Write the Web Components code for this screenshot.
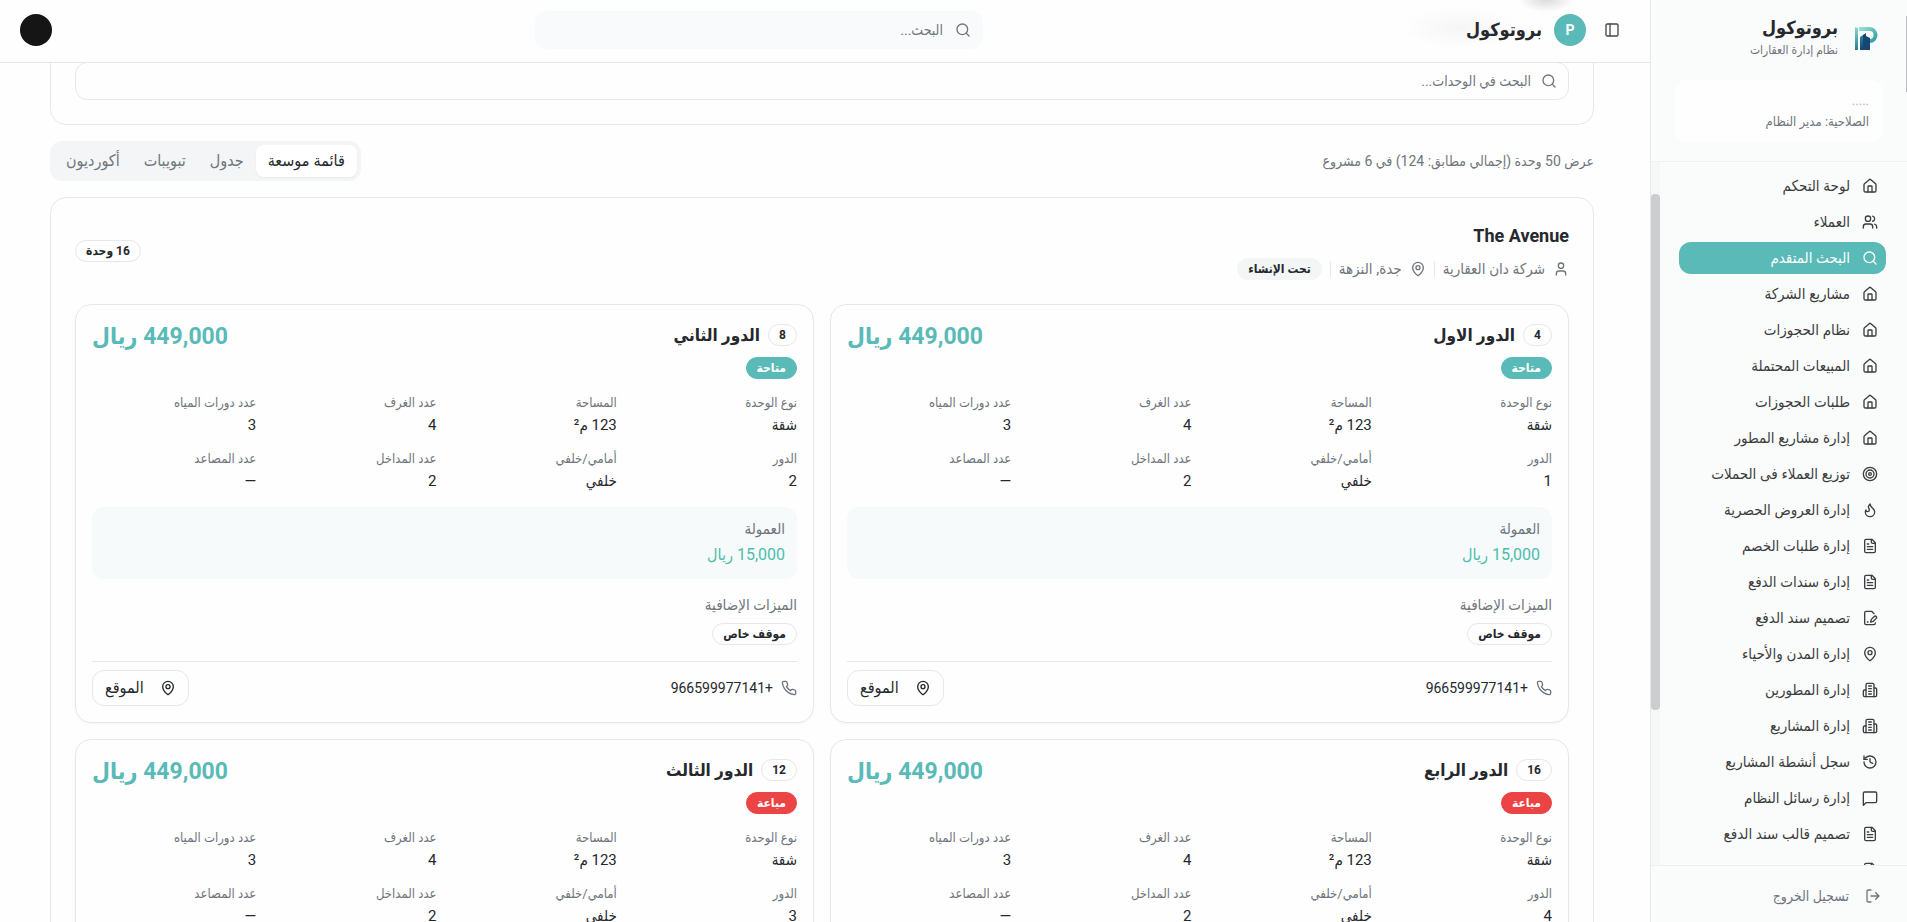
<!DOCTYPE html>
<html lang="ar" dir="rtl">
<head>
<meta charset="UTF-8">
<meta name="viewport" content="width=device-width, initial-scale=1.0">
<title>بروتوكول</title>
<style>
  :root {
    --teal: #59bab7;
    --red: #ec4345;
    --text: #25282d;
    --muted: #6f757d;
    --line: #e6e7e9;
    --soft: #f3f5f6;
  }
  html, body { height: 100%; }
  body {
    margin: 0;
    overflow: hidden;
    background: #fefefe;
    color: var(--text);
    font: 14px/20px Roboto, "DejaVu Sans Condensed", "DejaVu Sans", sans-serif;
  }
</style>
</head>
<body>

<app-shell>
  <side-bar slot="side">
    <nav-item icon="house"></nav-item>
    <nav-item icon="house">لوحة التحكم</nav-item>
    <nav-item icon="users">العملاء</nav-item>
    <nav-item icon="search" active>البحث المتقدم</nav-item>
    <nav-item icon="house">مشاريع الشركة</nav-item>
    <nav-item icon="house">نظام الحجوزات</nav-item>
    <nav-item icon="house">المبيعات المحتملة</nav-item>
    <nav-item icon="house">طلبات الحجوزات</nav-item>
    <nav-item icon="house">إدارة مشاريع المطور</nav-item>
    <nav-item icon="target">توزيع العملاء فى الحملات</nav-item>
    <nav-item icon="flame">إدارة العروض الحصرية</nav-item>
    <nav-item icon="file">إدارة طلبات الخصم</nav-item>
    <nav-item icon="file">إدارة سندات الدفع</nav-item>
    <nav-item icon="sign">تصميم سند الدفع</nav-item>
    <nav-item icon="pin">إدارة المدن والأحياء</nav-item>
    <nav-item icon="building">إدارة المطورين</nav-item>
    <nav-item icon="building">إدارة المشاريع</nav-item>
    <nav-item icon="history">سجل أنشطة المشاريع</nav-item>
    <nav-item icon="message">إدارة رسائل النظام</nav-item>
    <nav-item icon="file">تصميم قالب سند الدفع</nav-item>
    <nav-item icon="file"></nav-item>
  </side-bar>

  <top-bar slot="top">بروتوكول</top-bar>

  <unit-search></unit-search>
  <view-bar>
    <span slot="count">عرض 50 وحدة (إجمالي مطابق: 124) في 6 مشروع</span>
  </view-bar>
  <project-card>
    <span slot="name">The Avenue</span>
    <span slot="company">شركة دان العقارية</span>
    <span slot="place">جدة, النزهة</span>
    <span slot="state">تحت الإنشاء</span>
    <span slot="total">16 وحدة</span>
    <unit-card number="4" name="الدور الاول" floor="1" status="متاحة"></unit-card>
    <unit-card number="8" name="الدور الثاني" floor="2" status="متاحة"></unit-card>
    <unit-card number="16" name="الدور الرابع" floor="4" status="مباعة" sold></unit-card>
    <unit-card number="12" name="الدور الثالث" floor="3" status="مباعة" sold></unit-card>
  </project-card>
</app-shell>

<script>
// 24x24 line icons
const icons = {
  house: '<path d="M15 21v-8a1 1 0 0 0-1-1h-4a1 1 0 0 0-1 1v8"/><path d="M3 10a2 2 0 0 1 .709-1.528l7-5.999a2 2 0 0 1 2.582 0l7 5.999A2 2 0 0 1 21 10v9a2 2 0 0 1-2 2H5a2 2 0 0 1-2-2z"/>',
  users: '<path d="M16 21v-2a4 4 0 0 0-4-4H6a4 4 0 0 0-4 4v2"/><circle cx="9" cy="7" r="4"/><path d="M22 21v-2a4 4 0 0 0-3-3.87M16 3.13a4 4 0 0 1 0 7.75"/>',
  user: '<path d="M19 21v-2a4 4 0 0 0-4-4H9a4 4 0 0 0-4 4v2"/><circle cx="12" cy="7" r="4"/>',
  search: '<circle cx="11" cy="11" r="8"/><path d="m21 21-4.3-4.3"/>',
  target: '<circle cx="12" cy="12" r="10"/><circle cx="12" cy="12" r="6"/><circle cx="12" cy="12" r="2"/>',
  flame: '<path d="M8.5 14.5A2.5 2.5 0 0 0 11 12c0-1.38-.5-2-1-3-1.072-2.143-.224-4.054 2-6 .5 2.5 2 4.9 4 6.5 2 1.6 3 3.5 3 5.5a7 7 0 1 1-14 0c0-1.153.433-2.294 1-3a2.5 2.5 0 0 0 2.5 2.5z"/>',
  file: '<path d="M15 2H6a2 2 0 0 0-2 2v16a2 2 0 0 0 2 2h12a2 2 0 0 0 2-2V7Z"/><path d="M14 2v4a2 2 0 0 0 2 2h4M10 9H8M16 13H8M16 17H8"/>',
  sign: '<path d="M20 19.5v.5a2 2 0 0 1-2 2H6a2 2 0 0 1-2-2V4a2 2 0 0 1 2-2h8.5L18 5.5"/><path d="M8 18h1"/><path d="M18.42 9.61a2.1 2.1 0 1 1 2.97 2.97L16.95 17 13 18l.99-3.95 4.43-4.44Z"/>',
  pin: '<path d="M20 10c0 4.993-5.539 10.193-7.399 11.799a1 1 0 0 1-1.202 0C9.539 20.193 4 14.993 4 10a8 8 0 0 1 16 0"/><circle cx="12" cy="10" r="3"/>',
  building: '<path d="M6 22V4a2 2 0 0 1 2-2h8a2 2 0 0 1 2 2v18Z"/><path d="M6 12H4a2 2 0 0 0-2 2v6a2 2 0 0 0 2 2h2M18 9h2a2 2 0 0 1 2 2v9a2 2 0 0 1-2 2h-2M10 6h4M10 10h4M10 14h4M10 18h4"/>',
  history: '<path d="M3 12a9 9 0 1 0 9-9 9.75 9.75 0 0 0-6.74 2.74L3 8"/><path d="M3 3v5h5M12 7v5l4 2"/>',
  message: '<path d="M22 17a2 2 0 0 1-2 2H6l-4 4V5a2 2 0 0 1 2-2h16a2 2 0 0 1 2 2z"/>',
  logout: '<path d="M9 21H5a2 2 0 0 1-2-2V5a2 2 0 0 1 2-2h4M16 17l5-5-5-5M21 12H9"/>',
  phone: '<path d="M22 16.92v3a2 2 0 0 1-2.18 2 19.79 19.79 0 0 1-8.63-3.07 19.5 19.5 0 0 1-6-6 19.79 19.79 0 0 1-3.07-8.67A2 2 0 0 1 4.11 2h3a2 2 0 0 1 2 1.72 12.84 12.84 0 0 0 .7 2.81 2 2 0 0 1-.45 2.11L8.09 9.91a16 16 0 0 0 6 6l1.27-1.27a2 2 0 0 1 2.11-.45 12.84 12.84 0 0 0 2.81.7A2 2 0 0 1 22 16.92z"/>',
  panel: '<rect x="3" y="3" width="18" height="18" rx="2"/><path d="M9 3v18"/>'
};

// shared base: every element gives its markup and its styles
class BaseElement extends HTMLElement {
  constructor () {
    super();
    this.attachShadow({ mode: "open" });
  }
  connectedCallback () {
    const template = document.createElement('template');
    template.innerHTML = `
      <style>
        :host, * { box-sizing: border-box; }
        h1, h2, h3, p, dl, dt, dd { margin: 0; }
        button, input { font: inherit; color: inherit; }
        ${this.getStyles()}
      </style>
      ${this.getTemplate()}
    `;
    this.shadowRoot.replaceChildren(template.content.cloneNode(true));
  }
}

class LineIcon extends BaseElement {
  getTemplate () {
    return `
      <svg viewBox="0 0 24 24" fill="none" stroke="currentColor" stroke-width="2"
        stroke-linecap="round" stroke-linejoin="round" aria-hidden="true">${icons[this.getAttribute('name')]}</svg>
    `;
  }
  getStyles () {
    return `
      :host { display: block; flex: none; width: 16px; height: 16px; }
      svg { display: block; width: 100%; height: 100%; }
    `;
  }
}

class AppShell extends BaseElement {
  getTemplate () {
    return `
      <slot name="side"></slot>
      <div class="page">
        <slot name="top"></slot>
        <main><slot></slot></main>
      </div>
      <i class="thumb"></i>
    `;
  }
  getStyles () {
    return `
      :host { display: flex; height: 100vh; overflow: hidden; }
      .page { flex: 1; min-width: 0; display: flex; flex-direction: column; }
      main {
        flex: 1;
        min-height: 0;
        overflow: hidden;
        display: flex;
        flex-direction: column;
        gap: 16px;
        padding: 0 56px 0 50px;
      }
      .thumb {
        position: absolute;
        top: 16px;
        right: 0;
        width: 1px;
        height: 76px;
        background: #b9bbbd;
      }
    `;
  }
}

class SideBar extends BaseElement {
  getTemplate () {
    return `
      <header>
        <div class="brand">
          <svg class="logo" viewBox="0 0 24 24" aria-hidden="true">
            <defs>
              <linearGradient id="bar" x1="0" y1="0" x2="0" y2="1">
                <stop offset="0" stop-color="#8edbd0"/><stop offset="1" stop-color="#1f7f8b"/>
              </linearGradient>
              <linearGradient id="bow" x1="0" y1="0" x2="1" y2="1">
                <stop offset="0" stop-color="#9adfd3"/><stop offset="1" stop-color="#2f9d9f"/>
              </linearGradient>
              <linearGradient id="tower" x1="0" y1="0" x2="0" y2="1">
                <stop offset="0" stop-color="#2b8c97"/><stop offset="1" stop-color="#15406e"/>
              </linearGradient>
            </defs>
            <path fill="url(#bar)" d="M1 1l3 1v22H1z"/>
            <path fill="none" stroke="url(#bow)" stroke-width="4" d="M5 3h10a6 6 0 0 1 1 12"/>
            <path fill="url(#tower)" d="M6 11l3-2v15H6z"/>
            <path fill="#164674" d="M9 9l3-2v3l4 2v12H9z"/>
          </svg>
          <div>
            <h1>بروتوكول</h1>
            <p>نظام إدارة العقارات</p>
          </div>
        </div>
        <div class="account">
          <span class="dots">.....</span>
          <span>الصلاحية: مدير النظام</span>
        </div>
      </header>
      <div class="scroll">
        <nav><slot></slot></nav>
        <div class="track"><i></i></div>
      </div>
      <footer>
        <button type="button"><line-icon name="logout"></line-icon>تسجيل الخروج</button>
      </footer>
    `;
  }
  getStyles () {
    return `
      :host {
        display: flex;
        flex-direction: column;
        flex: none;
        width: 257px;
        background: #fafbfb;
        border-left: 1px solid var(--line);
      }
      header { padding: 16px 24px 19px; border-bottom: 1px solid #f0f1f2; }
      .brand { display: flex; align-items: center; gap: 16px; height: 44px; padding-right: 5px; }
      .logo { width: 24px; height: 24px; }
      h1 { font-size: 18px; line-height: 24px; font-weight: 700; }
      .brand p { font-size: 12px; line-height: 20px; color: var(--muted); }
      .account {
        display: flex;
        flex-direction: column;
        gap: 4px;
        margin-top: 20px;
        padding: 14px;
        height: 62px;
        border-radius: 12px;
        background: #fefefe;
        color: var(--muted);
        font-size: 13px;
        line-height: 20px;
        white-space: nowrap;
      }
      .dots { line-height: 14px; color: #b4b8bc; }
      .scroll { flex: 1; min-height: 0; display: flex; overflow: hidden; }
      /* the list is scrolled a little past its first entry */
      nav {
        flex: 1;
        display: flex;
        flex-direction: column;
        gap: 4px;
        margin-top: -28px;
        padding: 0 21px 0 19px;
      }
      .track { width: 9px; padding-top: 32px; background: #f6f8f8; }
      .track i { display: block; height: 516px; border-radius: 4px; background: #cbcdcf; }
      footer { padding: 12px 18px; border-top: 1px solid #eeeff0; height: 57px; }
      button {
        display: flex;
        align-items: center;
        gap: 16px;
        width: 100%;
        height: 36px;
        padding: 0 8px;
        border: 0;
        background: none;
        color: var(--muted);
      }
    `;
  }
}

class NavItem extends BaseElement {
  getTemplate () {
    return `
      <a href="#"><line-icon name="${this.getAttribute('icon')}"></line-icon><slot></slot></a>
    `;
  }
  getStyles () {
    return `
      :host { display: block; flex: none; }
      a {
        display: flex;
        align-items: center;
        gap: 12px;
        height: 32px;
        padding: 0 8px;
        border-radius: 12px;
        color: #3b3d41;
        font-size: 15px;
        text-decoration: none;
        white-space: nowrap;
      }
      :host([active]) a { background: var(--teal); color: #fff; }
    `;
  }
}

class TopBar extends BaseElement {
  getTemplate () {
    return `
      <div class="brand">
        <button type="button" aria-label="القائمة"><line-icon name="panel"></line-icon></button>
        <span class="mark">P</span>
        <h2><slot></slot></h2>
      </div>
      <label>
        <line-icon name="search"></line-icon>
        <input type="text" placeholder="البحث..." aria-label="البحث">
      </label>
      <button type="button" class="avatar" aria-label="الحساب"></button>
    `;
  }
  getStyles () {
    return `
      :host {
        display: flex;
        flex: none;
        align-items: center;
        justify-content: space-between;
        height: 63px;
        padding: 0 24px 2px 20px;
        border-bottom: 1px solid var(--line);
        z-index: 1;
        /* blurred content that passes under the bar */
        background:
          radial-gradient(28px 12px at calc(100% - 104px) 0, #dcdcdc, #fefefe00),
          radial-gradient(56px 20px at calc(100% - 190px) 28px, #f5f5f5, #fefefe00),
          #fefefe;
      }
      .brand { display: flex; align-items: center; gap: 12px; }
      .brand button { padding: 6px; border: 0; background: none; color: #44474b; }
      .mark {
        width: 32px;
        height: 32px;
        border-radius: 50%;
        background: var(--teal);
        color: #fff;
        font-weight: 700;
        line-height: 32px;
        text-align: center;
      }
      h2 { font-size: 18px; line-height: 28px; font-weight: 700; }
      label {
        display: flex;
        flex: 0 1 448px;
        align-items: center;
        gap: 12px;
        height: 38px;
        padding: 0 12px;
        border-radius: 12px;
        background: #f9fafb;
        color: var(--muted);
      }
      input { flex: 1; min-width: 0; padding: 0; border: 0; outline: 0; background: none; }
      input::placeholder { color: var(--muted); opacity: 1; }
      .avatar { width: 32px; height: 32px; padding: 0; border: 0; border-radius: 50%; background: #151515; }
    `;
  }
}

class UnitSearch extends BaseElement {
  getTemplate () {
    return `
      <label>
        <line-icon name="search"></line-icon>
        <input type="text" placeholder="البحث في الوحدات..." aria-label="البحث في الوحدات">
      </label>
    `;
  }
  getStyles () {
    return `
      :host {
        display: block;
        flex: none;
        margin-top: -26px;
        padding: 24px;
        border: 1px solid var(--line);
        border-radius: 16px;
      }
      label {
        display: flex;
        align-items: center;
        gap: 10px;
        height: 38px;
        padding: 0 11px;
        border: 1px solid var(--line);
        border-radius: 12px;
        color: var(--muted);
      }
      input { flex: 1; min-width: 0; padding: 0; border: 0; outline: 0; background: none; }
      input::placeholder { color: var(--muted); opacity: 1; }
    `;
  }
}

class ViewBar extends BaseElement {
  getTemplate () {
    return `
      <slot name="count"></slot>
      <div class="tabs">
        <button type="button" class="on">قائمة موسعة</button>
        <button type="button">جدول</button>
        <button type="button">تبويبات</button>
        <button type="button">أكورديون</button>
      </div>
    `;
  }
  getStyles () {
    return `
      :host {
        display: flex;
        flex: none;
        align-items: center;
        justify-content: space-between;
        color: var(--muted);
      }
      .tabs {
        display: flex;
        padding: 4px;
        border-radius: 12px;
        background: var(--soft);
        font-size: 16px;
      }
      button {
        height: 32px;
        padding: 0 12px;
        border: 0;
        border-radius: 8px;
        background: none;
      }
      .on { background: #fff; color: var(--text); box-shadow: 0 1px 2px #0000000d; }
    `;
  }
}

class PillBadge extends BaseElement {
  getTemplate () {
    return `<slot></slot>`;
  }
  getStyles () {
    return `
      :host {
        display: inline-block;
        min-width: 29px;
        padding: 0 10px;
        border: 1px solid var(--line);
        border-radius: 11px;
        color: var(--text);
        font-size: 12px;
        line-height: 20px;
        font-weight: 700;
        text-align: center;
        white-space: nowrap;
      }
      :host([kind="soft"]) { background: var(--soft); border-color: var(--soft); }
      :host([kind="free"]) { background: var(--teal); border-color: var(--teal); color: #fff; }
      :host([kind="sold"]) { background: var(--red); border-color: var(--red); color: #fff; }
    `;
  }
}

class ProjectCard extends BaseElement {
  getTemplate () {
    return `
      <header>
        <div>
          <h2><slot name="name"></slot></h2>
          <div class="meta">
            <line-icon name="user"></line-icon><slot name="company"></slot>
            <i></i>
            <line-icon name="pin"></line-icon><slot name="place"></slot>
            <i></i>
            <pill-badge kind="soft"><slot name="state"></slot></pill-badge>
          </div>
        </div>
        <pill-badge><slot name="total"></slot></pill-badge>
      </header>
      <div class="units"><slot></slot></div>
    `;
  }
  getStyles () {
    return `
      :host {
        display: block;
        flex: none;
        padding: 24px;
        border: 1px solid var(--line);
        border-radius: 16px;
      }
      header { display: flex; align-items: center; justify-content: space-between; margin-bottom: 24px; }
      h2 { font-size: 18px; line-height: 28px; font-weight: 700; }
      .meta { display: flex; align-items: center; gap: 8px; margin-top: 8px; color: var(--muted); font-size: 15px; }
      .meta i { width: 1px; height: 16px; background: var(--line); }
      .units { display: grid; grid-template-columns: 1fr 1fr; gap: 16px; }
    `;
  }
}

class UnitCard extends BaseElement {
  getTemplate () {
    const facts = [
      ['نوع الوحدة', 'شقة'],
      ['المساحة', '123 م²'],
      ['عدد الغرف', '4'],
      ['عدد دورات المياه', '3'],
      ['الدور', this.getAttribute('floor')],
      ['أمامي/خلفي', 'خلفي'],
      ['عدد المداخل', '2'],
      ['عدد المصاعد', '—']
    ];
    return `
      <header>
        <div>
          <div class="title">
            <pill-badge>${this.getAttribute('number')}</pill-badge>
            <h3>${this.getAttribute('name')}</h3>
          </div>
          <pill-badge kind="${this.hasAttribute('sold') ? 'sold' : 'free'}">${this.getAttribute('status')}</pill-badge>
        </div>
        <strong>449,000 ريال</strong>
      </header>
      <dl>${facts.map(([label, value]) => `<div><dt>${label}</dt><dd>${value}</dd></div>`).join('')}</dl>
      <div class="fee">
        <p>العمولة</p>
        <b>15,000 ريال</b>
      </div>
      <div class="extra">
        <p>الميزات الإضافية</p>
        <pill-badge>موقف خاص</pill-badge>
      </div>
      <footer>
        <span class="phone"><line-icon name="phone"></line-icon>+966599977141</span>
        <button type="button"><line-icon name="pin"></line-icon>الموقع</button>
      </footer>
    `;
  }
  getStyles () {
    return `
      :host {
        display: block;
        padding: 16px;
        border: 1px solid var(--line);
        border-radius: 16px;
        box-shadow: 0 1px 2px #0000000a;
      }
      header { display: flex; justify-content: space-between; height: 60px; }
      .title { display: flex; align-items: center; gap: 8px; height: 28px; margin-bottom: 8px; }
      h3 { font-size: 17px; line-height: 28px; font-weight: 700; }
      strong { font-size: 23px; line-height: 32px; color: var(--teal); }
      dl {
        display: grid;
        grid-template-columns: repeat(4, 1fr);
        gap: 12px 16px;
        margin-top: 12px;
      }
      dt { font-size: 13px; line-height: 20px; color: var(--muted); }
      dd { font-size: 15px; line-height: 24px; }
      .fee { margin-top: 14px; padding: 12px; height: 72px; border-radius: 12px; background: #f6fafa; }
      .fee p, .extra p { color: var(--muted); font-size: 15px; }
      .fee b { display: block; font-size: 16px; line-height: 32px; font-weight: 400; color: #4dbcae; }
      .extra { margin-top: 16px; }
      .extra p { margin-bottom: 8px; }
      footer {
        display: flex;
        align-items: center;
        justify-content: space-between;
        margin-top: 16px;
        padding-top: 8px;
        border-top: 1px solid var(--line);
      }
      .phone { display: flex; align-items: center; gap: 8px; }
      .phone line-icon { color: var(--muted); }
      button {
        display: flex;
        align-items: center;
        gap: 16px;
        height: 36px;
        padding: 0 12px;
        border: 1px solid var(--line);
        border-radius: 12px;
        background: #fefefe;
        font-size: 16px;
      }
    `;
  }
}

customElements.define('line-icon', LineIcon);
customElements.define('pill-badge', PillBadge);
customElements.define('app-shell', AppShell);
customElements.define('side-bar', SideBar);
customElements.define('nav-item', NavItem);
customElements.define('top-bar', TopBar);
customElements.define('unit-search', UnitSearch);
customElements.define('view-bar', ViewBar);
customElements.define('project-card', ProjectCard);
customElements.define('unit-card', UnitCard);
</script>
</body>
</html>
